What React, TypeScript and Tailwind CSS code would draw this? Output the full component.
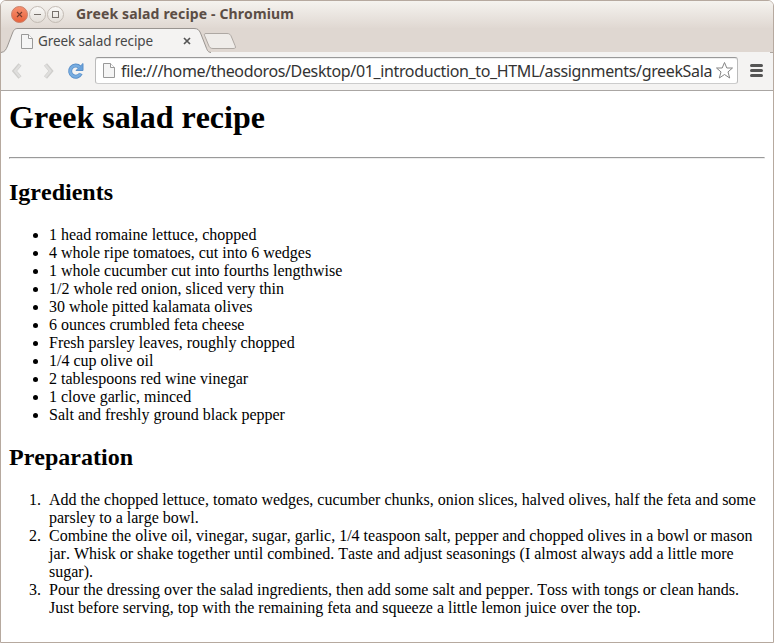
import React from "react";

const ingredients = [
  "1 head romaine lettuce, chopped",
  "4 whole ripe tomatoes, cut into 6 wedges",
  "1 whole cucumber cut into fourths lengthwise",
  "1/2 whole red onion, sliced very thin",
  "30 whole pitted kalamata olives",
  "6 ounces crumbled feta cheese",
  "Fresh parsley leaves, roughly chopped",
  "1/4 cup olive oil",
  "2 tablespoons red wine vinegar",
  "1 clove garlic, minced",
  "Salt and freshly ground black pepper",
];

const steps = [
  "Add the chopped lettuce, tomato wedges, cucumber chunks, onion slices, halved olives, half the feta and some parsley to a large bowl.",
  "Combine the olive oil, vinegar, sugar, garlic, 1/4 teaspoon salt, pepper and chopped olives in a bowl or mason jar. Whisk or shake together until combined. Taste and adjust seasonings (I almost always add a little more sugar).",
  "Pour the dressing over the salad ingredients, then add some salt and pepper. Toss with tongs or clean hands. Just before serving, top with the remaining feta and squeeze a little lemon juice over the top.",
];

function PageIcon() {
  return (
    <svg width="12" height="15" viewBox="0 0 12 15" className="shrink-0">
      <path d="M.5 .5H7.5L11.5 4.5V14.5H.5Z" fill="#f5f5f5" stroke="#999" />
      <path d="M7.5 .5V4.5H11.5" fill="#fff" stroke="#999" />
    </svg>
  );
}

function WindowButtons() {
  return (
    <svg width="56" height="19" viewBox="0 0 56 19" className="shrink-0">
      <defs>
        <linearGradient id="close" x1="0" y1="0" x2="0" y2="1">
          <stop offset="0" stopColor="#f79271" />
          <stop offset="1" stopColor="#e8613a" />
        </linearGradient>
        <linearGradient id="button" x1="0" y1="0" x2="0" y2="1">
          <stop offset="0" stopColor="#fbfaf8" />
          <stop offset="1" stopColor="#e2ddd7" />
        </linearGradient>
      </defs>
      <circle cx="9.5" cy="9.5" r="8" fill="url(#close)" stroke="#c9816b" />
      <circle cx="27.5" cy="9.5" r="8" fill="url(#button)" stroke="#c2bab3" />
      <circle cx="45.5" cy="9.5" r="8" fill="url(#button)" stroke="#c2bab3" />
      <path d="M7 7L12 12M12 7L7 12" stroke="#733b2c" strokeWidth="1.1" />
      <path d="M24 9.5H31" stroke="#77716b" />
      <rect x="42.5" y="6.5" width="6" height="6" fill="none" stroke="#77716b" />
    </svg>
  );
}

function TabShape() {
  return (
    <svg width="772" height="26" viewBox="1 28 772 26" className="absolute left-0 top-0">
      <path d="M1 54V52.500C5 52 6 49.500 7.500 46L12.500 33C14 29.500 15 28.500 18 28.500H194C198 28.500 199 30 200.500 33L206 47C207.500 51 208 52 211 52.500V54Z" fill="#f4f3f2" />
      <path d="M1 52.500C5 52 6 49.500 7.500 46L12.500 33C14 29.500 15 28.500 18 28.500H194C198 28.500 199 30 200.500 33L206 47C207.500 51 208 52 211 52.500" fill="none" stroke="#999490" />
      <path d="M206 33.500H227C229.500 33.500 230.500 34.500 231.500 37L235 45.500C236 48 235.500 48.500 233 48.500H213C210.500 48.500 209.500 47.500 208.500 45L205 36.500C204 34.500 204 33.500 206 33.500Z" fill="#efece9" stroke="#aea8a3" />
      <path d="M770 52.500H773" stroke="#aea7a1" />
    </svg>
  );
}

function ReloadIcon() {
  return (
    <svg width="18" height="18" viewBox="0 0 18 18" className="ml-[11px] shrink-0">
      <path d="M12.800 5.200A5.600 5.600 0 1 0 13.800 11.500" fill="none" stroke="#5a8fc9" strokeWidth="4" />
      <path d="M16 1.500V8.500H9L11.500 6L13.800 3.700Z" fill="#69a2dc" stroke="#5a8fc9" />
      <path d="M12.600 5.300A5.500 5.500 0 1 0 13.600 11.500" fill="none" stroke="#77ade1" strokeWidth="2.400" />
    </svg>
  );
}

function Toolbar() {
  return (
    <div className="flex h-[39px] shrink-0 items-center border-b border-[#aaa6a3] bg-[#f4f3f2] pb-px pl-[11px]">
      <svg width="44" height="18" viewBox="0 0 44 18" className="shrink-0">
        <path d="M8 2.500L2.500 9L8 15.500" fill="none" stroke="#cfcecc" strokeWidth="4" />
        <path d="M33.500 2.500L39 9L33.500 15.500" fill="none" stroke="#cfcecc" strokeWidth="4" />
        <path d="M8 3L3 9L8 15M33.500 3L38.500 9L33.500 15" fill="none" stroke="#dfdedd" strokeWidth="2" />
      </svg>
      <ReloadIcon />
      <div className="ml-2.5 flex h-[27px] w-[643px] shrink-0 items-center rounded-[3px] border border-t-[#999] border-r-[#bbb] border-b-[#ccc] border-l-[#bbb] bg-white pl-[7px] shadow-[inset_0_1px_0_#eeeeee]">
        <PageIcon />
        <div className="ml-[6px] w-[592px] shrink-0 whitespace-nowrap font-['Noto_Sans',sans-serif] text-[16px] leading-[24px] tracking-[-0.36px] text-[#333]">
          file:///home/theodoros/Desktop/01_introduction_to_HTML/assignments/greekSala
        </div>
        <svg width="19" height="19" viewBox="0 0 19 19" className="ml-[2px] shrink-0">
          <path d="M9.500 1.500L11.800 7H17.500L13 10.900L14.700 17L9.500 13.500L4.300 17L6 10.900L1.500 7H7.200Z" fill="#fff" stroke="#858585" strokeLinejoin="round" />
        </svg>
      </div>
      <svg width="13" height="13" viewBox="0 0 13 13" className="ml-3 shrink-0">
        <path d="M1.500 1.500H11.500M1.500 6.500H11.500M1.500 11.500H11.500" stroke="#555" strokeWidth="3" strokeLinecap="round" />
      </svg>
    </div>
  );
}

export default function App() {
  return (
    <div className="h-[643px] w-[774px] bg-white">
      <div className="flex h-[643px] w-[774px] flex-col overflow-hidden rounded-t-[6px] border border-[#b6a99f] bg-white">
        <header className="flex h-[27px] shrink-0 items-center bg-linear-to-b from-[#f5f3ef] to-[#e0d8d2] pl-[9px]">
          <WindowButtons />
          <span className="relative -top-px ml-[10px] whitespace-nowrap font-['Noto_Sans',sans-serif] text-[14px] font-bold leading-5 tracking-[0.15px] text-[#5b4d45]">Greek salad recipe - Chromium</span>
        </header>
        <div className="relative h-[24px] shrink-0 bg-[#dfd7d1]">
          <TabShape />
          <div className="relative flex h-[26px] items-center pl-5">
            <PageIcon />
            <span className="ml-[5px] w-[145px] shrink-0 whitespace-nowrap font-['Noto_Sans',sans-serif] text-[13.500px] tracking-[-0.1px] leading-5 text-[#484848]">Greek salad recipe</span>
            <svg width="8" height="8" viewBox="0 0 8 8" className="shrink-0">
              <path d="M1 1L7 7M7 1L1 7" stroke="#555" strokeWidth="1.700" />
            </svg>
          </div>
        </div>
        <Toolbar />
        <main className="px-2 pt-2 font-['Liberation_Serif',serif] text-[16px] leading-[18px] text-black [font-kerning:none]">
          <h1 className="text-[32px] font-bold leading-[37px]">Greek salad recipe</h1>
          <hr className="mt-[21px] h-[2px] border border-t-[#9a9a9a] border-l-[#9a9a9a] border-r-[#eee] border-b-[#eee]" />
          <h2 className="mt-5 text-[24px] font-bold leading-[27px]">Igredients</h2>
          <ul className="mt-5 list-disc pl-10">
            {ingredients.map((item) => <li key={item}>{item}</li>)}
          </ul>
          <h2 className="mt-5 text-[24px] font-bold leading-[27px]">Preparation</h2>
          <ol className="mt-5">
            {steps.map((step, index) => (
              <li key={step} className="flex">
                <span className="w-8 shrink-0 text-right">{index + 1}.</span>
                <span className="ml-2">{step}</span>
              </li>
            ))}
          </ol>
        </main>
      </div>
    </div>
  );
}
